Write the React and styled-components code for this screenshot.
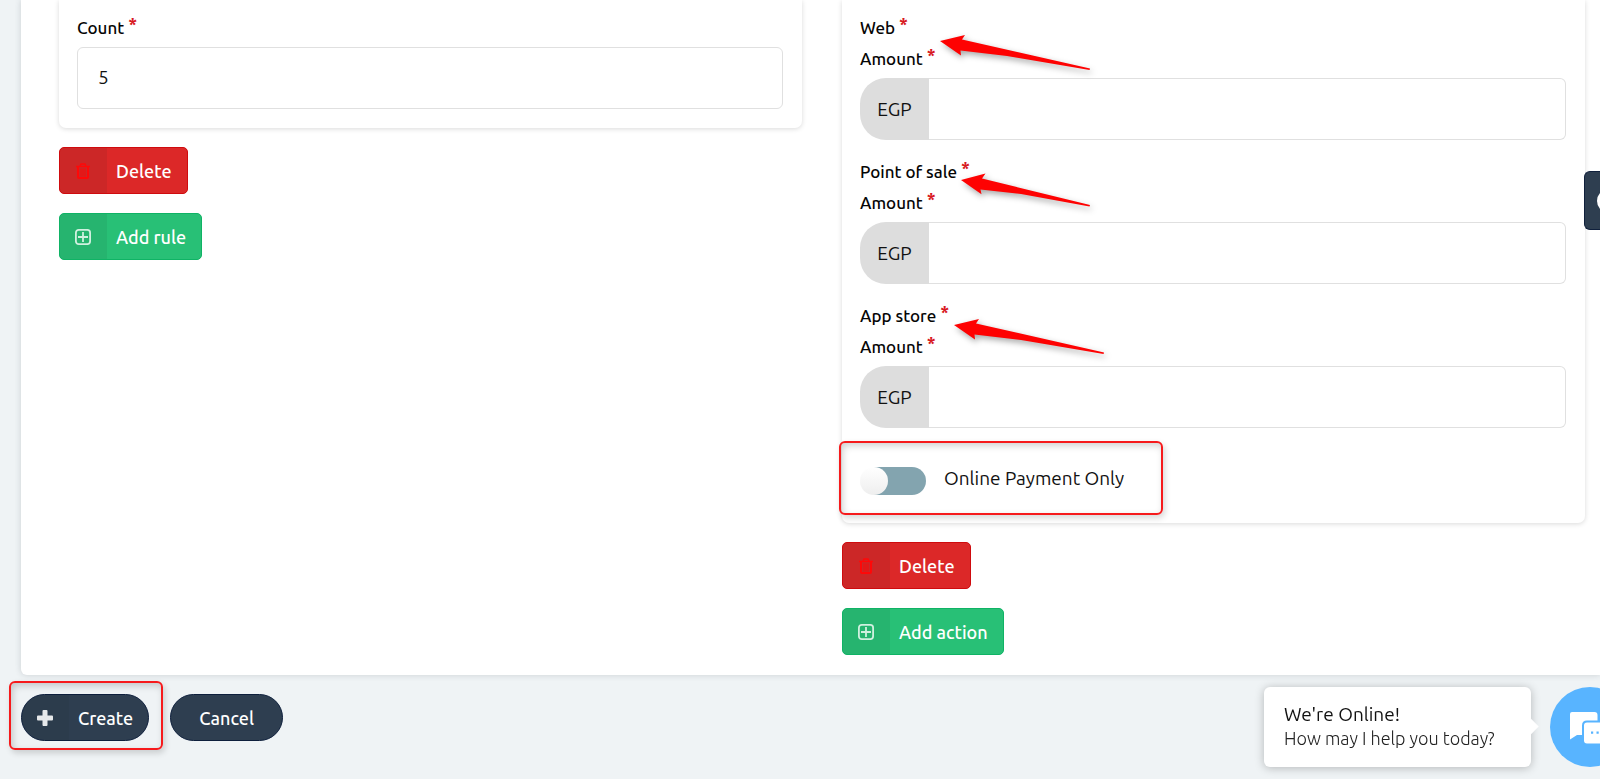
import React from "react";
import styled, { createGlobalStyle } from "styled-components";

const GlobalStyle = createGlobalStyle`
  *, *::before, *::after { box-sizing: border-box; }
  body {
    margin: 0;
    background: #eff3f5;
    color: #111;
    font-family: Ubuntu, "Noto Sans", sans-serif;
    overflow-x: hidden;
  }
  button, input { font: inherit; color: inherit; }
`;

const Page = styled.div`
  min-height: 100vh;
  padding-left: 21px;
`;

const Panel = styled.main`
  display: grid;
  grid-template-columns: 1fr 1fr;
  gap: 40px;
  padding: 0 15px 20px 38px;
  background: #fff;
  border-bottom-left-radius: 6px;
  box-shadow: 0 0 6px rgba(60, 70, 80, 0.2);
`;

const Column = styled.section`
  display: flex;
  flex-direction: column;
  align-items: flex-start;
  gap: 19px;
`;

const Card = styled.div`
  align-self: stretch;
  display: flex;
  flex-direction: column;
  gap: 16px;
  padding: 12px 19px 19px 18px;
  border-radius: 0 0 7px 7px;
  box-shadow: 0 1px 5px rgba(0, 0, 0, 0.15);
`;

const Field = styled.div`
  display: flex;
  flex-direction: column;
`;

const labelText = `
  position: relative;
  font-size: 17px;
  line-height: 31px;
  font-weight: 500;
  color: #050505;
`;

const Caption = styled.div`${labelText}`;

const Label = styled.label`
  ${labelText}
  margin-bottom: 4px;
`;

const Required = styled.sup`
  margin-left: 4px;
  color: #d8191f;
  font-size: 18px;
  font-weight: 700;
  line-height: 0;
  vertical-align: 3px;
`;

const InputGroup = styled.div`
  display: flex;
  height: 62px;
`;

const Addon = styled.span`
  flex: none;
  width: 69px;
  background: #ddd;
  border-radius: 26px 0 0 26px;
  font-size: 19px;
  line-height: 62px;
  text-align: center;
`;

const TextInput = styled.input`
  flex: 1;
  min-width: 0;
  padding: 0 20px 2px;
  border: 1px solid #e0e0e0;
  border-left-width: ${(p) => (p.$joined ? 0 : "1px")};
  border-radius: ${(p) => (p.$joined ? "0 6px 6px 0" : "6px")};
  background: #fff;
  font-size: 19px;
  outline: none;
`;

const SwitchRow = styled.div`
  position: relative;
  display: flex;
  align-items: center;
  gap: 18px;
  height: 28px;
  margin: 23px 0 9px;
`;

const Switch = styled.input`
  appearance: none;
  flex: none;
  width: 66px;
  height: 28px;
  margin: 0;
  border-radius: 14px;
  background: linear-gradient(90deg, #fff 14px, #83a4af 14px);

  &::before {
    content: "";
    display: block;
    width: 28px;
    height: 28px;
    border-radius: 50%;
    background: linear-gradient(#fff, #eee);
  }
`;

const SwitchLabel = styled.label`
  padding-bottom: 6px;
  font-size: 19px;
  line-height: 24px;
`;

const tones = {
  danger: { bg: "#dc2828", edge: "#cf0b0e", icon: "#ff0808" },
  success: { bg: "#28c076", edge: "#0fb365", icon: "#d0f0df" },
  dark: { bg: "#2e3e50", edge: "#0e1f3c", icon: "#e6e8ea" },
};

const Button = styled.button`
  display: inline-flex;
  align-items: stretch;
  height: 47px;
  padding: 0;
  overflow: hidden;
  border: 1px solid ${(p) => tones[p.$tone].edge};
  border-radius: ${(p) => (p.$pill ? "24px" : "5px")};
  background: ${(p) => tones[p.$tone].bg};
  color: #fff;
  font-size: 18px;
  font-weight: 500;
  line-height: 46px;
`;

const ButtonIcon = styled.span`
  display: flex;
  align-items: center;
  justify-content: center;
  width: 47px;
  padding-right: 2px;
  background: rgba(30, 40, 40, 0.08);
  color: ${(p) => tones[p.$tone].icon};
`;

const ButtonText = styled.span`
  padding: ${(p) => (p.$wide ? "0 28px" : "0 15px 0 9px")};
`;

const Actions = styled.footer`
  display: flex;
  gap: 21px;
  width: max-content;
  padding: 19px 0;
`;

const Highlight = styled.span`
  position: absolute;
  inset: ${(p) => p.$inset};
  width: ${(p) => p.$width || "auto"};
  border: 2px solid #f61a1c;
  border-radius: 6px;
  box-shadow: 2px 3px 6px rgba(0, 0, 0, 0.16), inset 2px 3px 7px rgba(0, 0, 0, 0.18);
  pointer-events: none;
`;

const HighlightAnchor = styled.div`
  position: relative;
  display: flex;
`;

const Pointer = styled.svg`
  position: absolute;
  left: ${(p) => p.$x}px;
  top: ${(p) => p.$y}px;
  overflow: visible;
  filter: drop-shadow(2px 3px 3px rgba(0, 0, 0, 0.35));
  pointer-events: none;
`;

const SideTab = styled.button`
  position: fixed;
  right: 0;
  top: 171px;
  width: 16px;
  height: 59px;
  padding: 0;
  overflow: hidden;
  border: 1px solid #10203c;
  border-right: 0;
  border-radius: 6px 0 0 6px;
  background: #2e3e50;

  &::before {
    content: "";
    display: block;
    width: 24px;
    height: 24px;
    margin-left: 12px;
    border-radius: 50%;
    background: #fff;
  }
`;

const Chat = styled.aside`
  position: fixed;
  right: -30px;
  bottom: 12px;
  display: flex;
  align-items: center;
  gap: 19px;
`;

const ChatBubble = styled.div`
  position: relative;
  width: 267px;
  padding: 15px 20px 17px;
  border-radius: 6px;
  background: #fff;
  box-shadow: 0 1px 10px rgba(0, 0, 0, 0.25);
  white-space: nowrap;

  &::after {
    content: "";
    position: absolute;
    top: 50%;
    right: -5px;
    width: 13px;
    height: 13px;
    margin-top: -7px;
    background: #fff;
    transform: rotate(45deg);
  }
`;

const ChatTitle = styled.p`
  margin: 0;
  font-size: 19px;
  line-height: 24px;
`;

const ChatText = styled.p`
  margin: 0;
  font-size: 18px;
  font-weight: 300;
  line-height: 24px;
  color: #222;
`;

const ChatButton = styled.button`
  width: 80px;
  height: 80px;
  padding: 0;
  border: 0;
  border-radius: 50%;
  background: #58b4ff;
`;

const TrashIcon = () => (
  <svg width="14" height="16" viewBox="0 0 14 16" fill="none" stroke="currentColor" strokeWidth="1.4">
    <path d="M0 3.500h14M4 3.200 5 1h4l1 2.200" />
    <path d="M2 4v10c0 .7.400 1 1 1h8c.6 0 1-.3 1-1V4" strokeWidth="2" />
    <path d="M5 5.500v8M7 5.500v8M9 5.500v8" strokeWidth="0.9" />
  </svg>
);

const PlusSquareIcon = () => (
  <svg width="16" height="16" viewBox="0 0 16 16" fill="none" stroke="currentColor" strokeWidth="1.8">
    <rect x="0.9" y="0.9" width="14.2" height="14.2" rx="2.8" />
    <path d="M8 3v10M3 8h10" />
  </svg>
);

const PlusIcon = () => (
  <svg width="16" height="16" viewBox="0 0 16 16" fill="currentColor">
    <path d="M6.500 0h3q1 0 1 1v4.500H15q1 0 1 1v3q0 1-1 1h-4.500V15q0 1-1 1h-3q-1 0-1-1v-4.500H1q-1 0-1-1v-3q0-1 1-1h4.500V1q0-1 1-1z" />
  </svg>
);

const ChatIcon = () => (
  <svg width="80" height="80" viewBox="0 0 80 80">
    <path d="M21.500 25h23q3 0 3 3v19q0 1-1 1H27l-7 4.500V27q0-2 2-2z" fill="#fff" />
    <path d="M37 34.500h24q4 0 4 4v22l-6-3H37q-4 0-4-4v-15q0-4 4-4z" fill="#fff" stroke="#58b4ff" strokeWidth="2" />
    <path d="M41 44.500h2.200v2.200h-2.200zM46.500 44.500h2.200v2.200h-2.200zM52 44.500h2.200v2.200h-2.200z" fill="#58b4ff" />
  </svg>
);

const ARROWS = {
  long: "M0 8 25 2 22 6.500 150 35.600 149.600 37 67 23 20.500 17.500 21 22.500z",
  short: "M0 8 24.500 1.500 21 6.500 129 33 128.500 34.500 60 22 19.500 17.500 20.500 22.300z",
};

const Arrow = ({ x, y, size }) => (
  <Pointer $x={x} $y={y} width="152" height="40" viewBox="0 0 152 40" aria-hidden="true">
    <path d={ARROWS[size]} fill="#fe0202" />
  </Pointer>
);

const IconButton = ({ tone, icon, pill, children }) => (
  <Button type="button" $tone={tone} $pill={pill}>
    <ButtonIcon $tone={tone}>{icon}</ButtonIcon>
    <ButtonText>{children}</ButtonText>
  </Button>
);

const channels = [
  { id: "web", name: "Web", arrow: { x: 80, y: 21, size: "long" } },
  { id: "pos", name: "Point of sale", arrow: { x: 101, y: 16, size: "short" } },
  { id: "app", name: "App store", arrow: { x: 94, y: 17, size: "long" } },
];

const PriceField = ({ id, name, arrow }) => (
  <Field>
    <Caption>
      {name}
      <Required>*</Required>
      <Arrow {...arrow} />
    </Caption>
    <Label htmlFor={id}>
      Amount<Required>*</Required>
    </Label>
    <InputGroup>
      <Addon>EGP</Addon>
      <TextInput id={id} $joined />
    </InputGroup>
  </Field>
);

export default function App() {
  return (
    <>
      <GlobalStyle />
      <Page>
        <Panel>
          <Column>
            <Card>
              <Field>
                <Label htmlFor="count">
                  Count<Required>*</Required>
                </Label>
                <InputGroup>
                  <TextInput id="count" defaultValue="5" />
                </InputGroup>
              </Field>
            </Card>
            <IconButton tone="danger" icon={<TrashIcon />}>Delete</IconButton>
            <IconButton tone="success" icon={<PlusSquareIcon />}>Add rule</IconButton>
          </Column>
          <Column>
            <Card>
              {channels.map((channel) => (
                <PriceField key={channel.id} {...channel} />
              ))}
              <SwitchRow>
                <Switch type="checkbox" id="online-only" />
                <SwitchLabel htmlFor="online-only">Online Payment Only</SwitchLabel>
                <Highlight $inset="-26px auto -20px -21px" $width="324px" />
              </SwitchRow>
            </Card>
            <IconButton tone="danger" icon={<TrashIcon />}>Delete</IconButton>
            <IconButton tone="success" icon={<PlusSquareIcon />}>Add action</IconButton>
          </Column>
        </Panel>
        <Actions>
          <HighlightAnchor>
            <IconButton tone="dark" pill icon={<PlusIcon />}>Create</IconButton>
            <Highlight $inset="-13px -14px -9px -12px" />
          </HighlightAnchor>
          <Button type="button" $tone="dark" $pill>
            <ButtonText $wide>Cancel</ButtonText>
          </Button>
        </Actions>
      </Page>
      <SideTab type="button" aria-label="Open side panel" />
      <Chat>
        <ChatBubble>
          <ChatTitle>We're Online!</ChatTitle>
          <ChatText>How may I help you today?</ChatText>
        </ChatBubble>
        <ChatButton type="button" aria-label="Open chat">
          <ChatIcon />
        </ChatButton>
      </Chat>
    </>
  );
}
